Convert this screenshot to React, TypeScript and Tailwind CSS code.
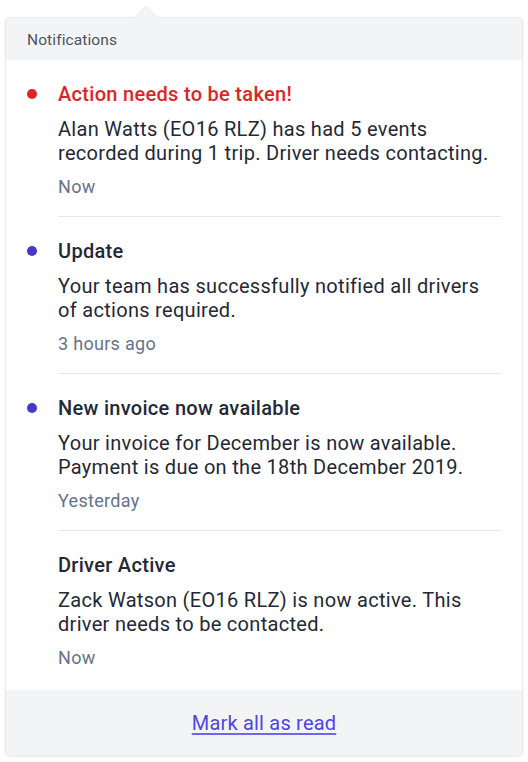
const notifications = [
  {
    id: 1,
    title: "Action needs to be taken!",
    body: "Alan Watts (EO16 RLZ) has had 5 events recorded during 1 trip. Driver needs contacting.",
    time: "Now",
    dot: "red",
  },
  {
    id: 2,
    title: "Update",
    body: "Your team has successfully notified all drivers of actions required.",
    time: "3 hours ago",
    dot: "blue",
  },
  {
    id: 3,
    title: "New invoice now available",
    body: "Your invoice for December is now available. Payment is due on the 18th December 2019.",
    time: "Yesterday",
    dot: "blue",
  },
  {
    id: 4,
    title: "Driver Active",
    body: "Zack Watson (EO16 RLZ) is now active. This driver needs to be contacted.",
    time: "Now",
    dot: null,
  },
];

export default function App() {
  return (
    <div className="min-h-screen bg-white font-['Roboto',sans-serif] tracking-[0.3px] pt-[17px] pl-[5px]">
      <div className="relative w-[518px] rounded-[5px] border border-[#ebebee] bg-white shadow-[0_1px_3px_rgba(0,0,0,0.08)]">
        {/* arrow */}
        <div className="absolute left-[131px] top-[-9px] h-[18px] w-[18px] rotate-45 rounded-tl-[2px] border-l border-t border-[#ebebee] bg-[#f3f4f6]" />

        {/* header */}
        <div className="relative rounded-t-[5px] bg-[#f3f4f6] px-[21px] h-[42px] flex items-center pt-[3px]">
          <span className="text-[15.5px] tracking-[0.1px] text-[#4b5563]">Notifications</span>
        </div>

        {/* list */}
        <div>
          {notifications.map((n, i) => {
            const last = i === notifications.length - 1;
            return (
              <div key={n.id} className="flex px-[21px] pt-[22px]">
                <div className="w-[10px] shrink-0 mr-[21px] pt-[7px]">
                  {n.dot && (
                    <div
                      className={`h-[10px] w-[10px] rounded-full ${
                        n.dot === "red" ? "bg-[#dc2626]" : "bg-[#4338ca]"
                      }`}
                    />
                  )}
                </div>
                <div
                  className={`flex-1 ${
                    last ? "pb-[20px]" : "pb-[17px] border-b border-[#e5e7eb]"
                  }`}
                >
                  <div
                    className={`text-[20px] leading-[24px] font-medium ${
                      n.dot === "red" ? "text-[#dc2626]" : "text-[#1f2937]"
                    }`}
                  >
                    {n.title}
                  </div>
                  <div className="mt-[11px] text-[20px] leading-[24px] text-[#1f2937]">
                    {n.body}
                  </div>
                  <div className="mt-[10px] text-[18px] leading-[24px] text-[#64748b]">
                    {n.time}
                  </div>
                </div>
              </div>
            );
          })}
        </div>

        {/* footer */}
        <div className="rounded-b-[5px] bg-[#f3f4f6] h-[65px] flex items-center justify-center">
          <a
            href="#"
            className="text-[20px] tracking-[0.2px] text-[#4f46e5] underline underline-offset-[3px] decoration-[#6f67ea]"
          >
            Mark all as read
          </a>
        </div>
      </div>
    </div>
  );
}
